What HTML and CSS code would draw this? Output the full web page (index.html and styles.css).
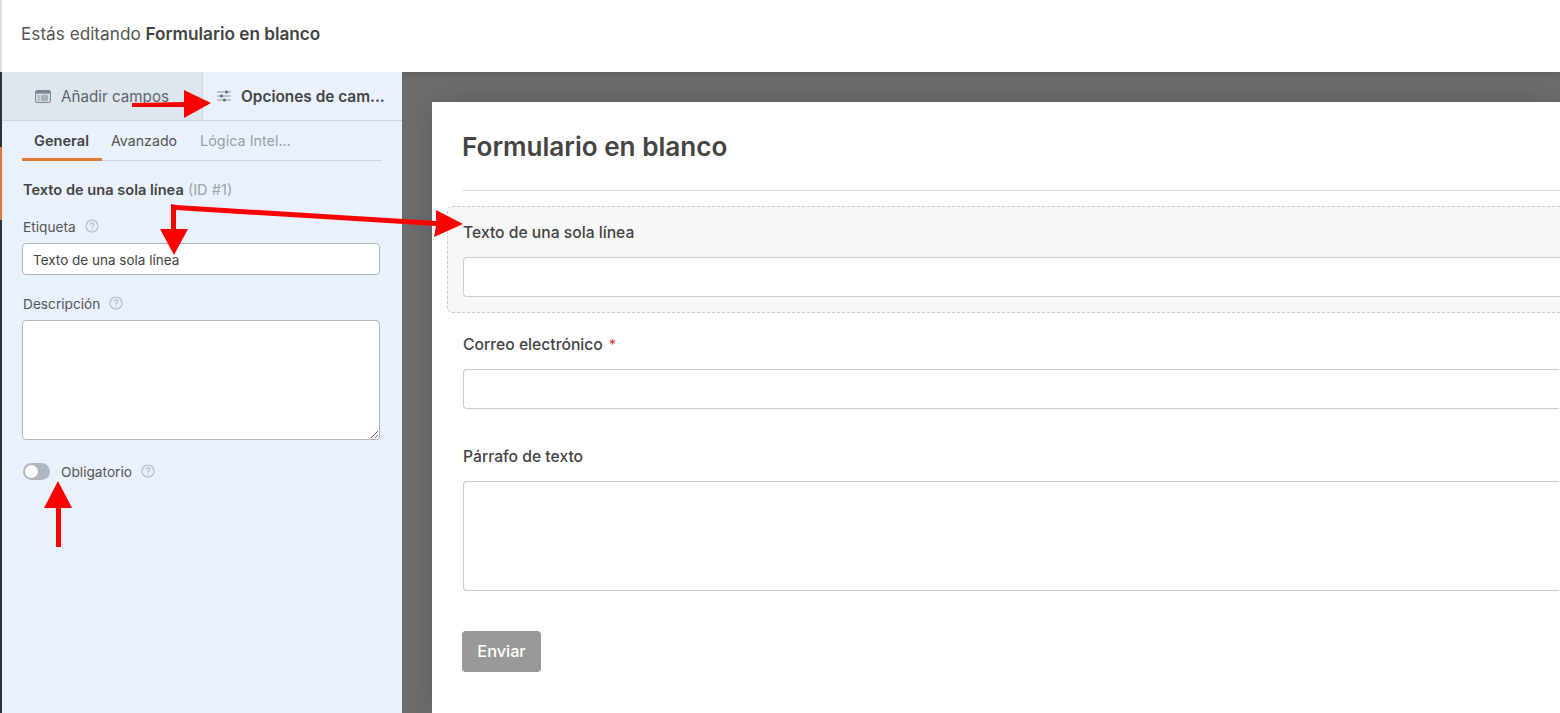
FILE: index.html
```html
<!DOCTYPE html>
<html lang="es">
<head>
    <meta charset="UTF-8">
    <title>Formulario en blanco</title>
    <link rel="stylesheet" href="styles.css">
</head>
<body>
    <header class="topbar">Estás editando <strong>Formulario en blanco</strong></header>

    <div class="builder">
        <div class="admin-strip"><div class="admin-strip-active"></div></div>

        <aside class="sidebar">
            <div class="tabs">
                <div class="tab tab-off">
                    <svg class="tab-icon" viewBox="0 0 16 13" width="16" height="13">
                        <rect x="0.5" y="0.5" width="15" height="12" rx="1.5" fill="#d3dae1" stroke="#7c8791"/>
                        <rect x="1" y="1" width="14" height="2.6" fill="#7c8791"/>
                        <path d="M3 6h1.5M3 8h1.5M3 10h1.5M6 6h7M6 8h7M6 10h7" stroke="#7c8791" stroke-width="1" fill="none"/>
                    </svg>
                    Añadir campos
                </div>
                <div class="tab tab-on">
                    <svg class="tab-icon" viewBox="0 0 14 12" width="14" height="12">
                        <path d="M0 2h14M0 6h14M0 10h14" stroke="#8a949d" stroke-width="1" fill="none"/>
                        <rect x="8" y="0.5" width="3" height="3" rx="1" fill="#6b7680"/>
                        <rect x="3" y="4.5" width="3" height="3" rx="1" fill="#6b7680"/>
                        <rect x="6" y="8.5" width="3" height="3" rx="1" fill="#6b7680"/>
                    </svg>
                    Opciones de cam...
                </div>
            </div>

            <div class="panel">
                <div class="subtabs">
                    <span class="subtab subtab-on">General</span>
                    <span class="subtab">Avanzado</span>
                    <span class="subtab subtab-off">Lógica Intel...</span>
                </div>

                <div class="field-name"><strong>Texto de una sola línea</strong> <span>(ID #1)</span></div>

                <div class="opt-label">Etiqueta
                    <svg class="help" viewBox="0 0 14 14" width="14" height="14"><circle cx="7" cy="7" r="6" fill="none" stroke="#b4bcc4" stroke-width="1.2"/><path d="M5.2 5.5a1.8 1.8 0 1 1 2.7 1.6c-.6.4-.9.7-.9 1.3" fill="none" stroke="#b4bcc4" stroke-width="1.2"/><circle cx="7" cy="10.3" r=".8" fill="#b4bcc4"/></svg>
                </div>
                <input class="opt-input" type="text" value="Texto de una sola línea">

                <div class="opt-label opt-label-desc">Descripción
                    <svg class="help" viewBox="0 0 14 14" width="14" height="14"><circle cx="7" cy="7" r="6" fill="none" stroke="#b4bcc4" stroke-width="1.2"/><path d="M5.2 5.5a1.8 1.8 0 1 1 2.7 1.6c-.6.4-.9.7-.9 1.3" fill="none" stroke="#b4bcc4" stroke-width="1.2"/><circle cx="7" cy="10.3" r=".8" fill="#b4bcc4"/></svg>
                </div>
                <textarea class="opt-textarea"></textarea>

                <div class="toggle-row">
                    <span class="toggle"><span class="toggle-knob"></span></span>
                    <span class="toggle-label">Obligatorio</span>
                    <svg class="help" viewBox="0 0 14 14" width="14" height="14"><circle cx="7" cy="7" r="6" fill="none" stroke="#b4bcc4" stroke-width="1.2"/><path d="M5.2 5.5a1.8 1.8 0 1 1 2.7 1.6c-.6.4-.9.7-.9 1.3" fill="none" stroke="#b4bcc4" stroke-width="1.2"/><circle cx="7" cy="10.3" r=".8" fill="#b4bcc4"/></svg>
                </div>
            </div>
        </aside>

        <main class="canvas">
            <div class="form-card">
                <h1 class="form-title">Formulario en blanco</h1>

                <div class="form-field form-field-active">
                    <label class="form-label">Texto de una sola línea</label>
                    <div class="form-input"></div>
                </div>
                <div class="form-field">
                    <label class="form-label">Correo electrónico <span class="req">*</span></label>
                    <div class="form-input"></div>
                </div>
                <div class="form-field form-field-big">
                    <label class="form-label">Párrafo de texto</label>
                    <div class="form-input form-input-big"></div>
                </div>

                <button class="submit" type="button">Enviar</button>
            </div>
        </main>
    </div>

    <!-- annotation arrows drawn over the screenshot -->
    <svg class="arrows" viewBox="0 0 1560 713" width="1560" height="713">
        <polygon points="132,103 184,102 184,90 211,103 184,118 184,107 132,107"/>
        <polygon points="171,204 176,205 436,221 436,210 463,224 434,237 436,226 176,210 176,229 188,229 174,255 160,229 171,229"/>
        <polygon points="58,481 72,508 61,508 61,547 56,547 56,508 44,508"/>
    </svg>
</body>
</html>
```

FILE: styles.css
```css
* {
    box-sizing: border-box;
}
html, body {
    height: 100%;
}
body {
    margin: 0;
    overflow: hidden;
    font-family: Inter, "Liberation Sans", sans-serif;
    color: #444;
    background: #fff;
}

.topbar {
    height: 72px;
    padding: 24px 0 0 19px;
    font-size: 17.2px;
    line-height: 20px;
    color: #555;
    background: #fff;
    border-left: 2px solid #dcdcdc;
}
.topbar strong {
    font-weight: 600;
    color: #444;
}

.builder {
    display: flex;
    height: 641px;
    overflow: hidden;
}
.admin-strip {
    width: 2px;
    padding-top: 75px;
    background: #2c3338;
}
.admin-strip-active {
    height: 73px;
    background: #e27730;
}

/* left column */
.sidebar {
    width: 400px;
    background: #e9f2fc;
}
.tabs {
    display: flex;
    height: 49px;
    border-bottom: 1px solid #ced7e0;
}
.tab {
    display: flex;
    align-items: center;
    font-size: 15.2px;
}
.tab-off {
    width: 201px;
    padding-left: 33px;
    color: #5c6670;
    background: #dfe7ee;
    border-right: 1px solid #ced7e0;
}
.tab-on {
    width: 199px;
    padding-left: 14px;
    font-size: 15.4px;
    font-weight: 600;
    color: #444;
}
.tab-icon {
    flex: none;
    margin-right: 10px;
}

.panel {
    padding: 0 20px;
}
.subtabs {
    display: flex;
    width: 360px;
    height: 40px;
    border-bottom: 1px solid #ced7e0;
}
.subtab {
    height: 40px;
    padding-top: 11px;
    font-size: 14.2px;
    line-height: 17px;
    color: #555;
    white-space: nowrap;
}
.subtab-on {
    width: 80px;
    margin-right: 9px;
    padding: 12px 0 0 12px;
    font-size: 14.6px;
    font-weight: 600;
    color: #444;
    border-bottom: 3px solid #e27730;
}
.subtab-off {
    margin-left: 23px;
    font-size: 14.4px;
    color: #999fa6;
}

.field-name {
    margin: 21px 0 0 1px;
    font-size: 14.6px;
    line-height: 17px;
    color: #99a1a9;
}
.field-name strong {
    font-weight: 600;
    color: #444;
}
.opt-label {
    display: flex;
    align-items: center;
    margin: 20px 0 0 1px;
    height: 16px;
    font-size: 13.7px;
    color: #555;
}
.opt-label-desc {
    margin-top: 21px;
}
.help {
    flex: none;
    margin: 0 0 2px 9px;
}
.opt-input {
    display: block;
    width: 358px;
    height: 32px;
    margin: 8px 0 0;
    padding: 1px 10px 0;
    font: 13.5px Inter, "Liberation Sans", sans-serif;
    color: #444;
    background: #fff;
    border: 1px solid #b0b7bf;
    border-radius: 4px;
}
.opt-textarea {
    display: block;
    width: 358px;
    height: 120px;
    margin: 8px 0 0;
    background: #fff;
    border: 1px solid #b0b7bf;
    border-radius: 4px;
}
.toggle-row {
    display: flex;
    align-items: center;
    margin: 23px 0 0 1px;
    height: 17px;
}
.toggle {
    display: block;
    width: 27px;
    height: 17px;
    padding: 2px;
    background: #b0b7bf;
    border-radius: 9px;
}
.toggle-knob {
    display: block;
    width: 13px;
    height: 13px;
    background: #fff;
    border-radius: 50%;
}
.toggle-label {
    margin-left: 11px;
    font-size: 13.7px;
    color: #555;
}

/* preview */
.canvas {
    flex: 1;
    min-width: 0;
    padding: 30px 0 0 30px;
    overflow: hidden;
    background: #6d6d6d;
    box-shadow: inset 0 8px 10px -8px rgba(0, 0, 0, .2);
}
.form-card {
    width: 1128px;
    height: 611px;
    padding: 30px 0 0 30px;
    background: #fff;
    box-shadow: 0 0 30px rgba(0, 0, 0, .15);
}
.form-title {
    height: 59px;
    margin: 0 0 15px;
    font-size: 26.1px;
    line-height: 30px;
    font-weight: 600;
    color: #444;
    border-bottom: 1px solid #ddd;
}
.form-field {
    height: 107px;
    margin: 0 0 5px -15px;
    padding: 16px 0 0 15px;
    border: 1px solid transparent;
}
.form-field-active {
    background: #f7f7f7;
    border: 1px dashed #ccc;
    border-right: 0;
    border-radius: 5px 0 0 5px;
}
.form-field-big {
    height: 196px;
}
.form-label {
    display: block;
    height: 19px;
    font-size: 15.7px;
    line-height: 19px;
    font-weight: 500;
    color: #444;
}
.req {
    margin-left: 2px;
    font-size: 14px;
    font-weight: 400;
    color: #d63638;
}
.form-input {
    height: 40px;
    margin-top: 15px;
    background: #fff;
    border: 1px solid #ccc;
    border-right: 0;
    border-radius: 4px 0 0 4px;
}
.form-input-big {
    height: 110px;
}
.submit {
    display: block;
    width: 79px;
    height: 41px;
    padding: 0 0 2px;
    font: 500 16.3px Inter, "Liberation Sans", sans-serif;
    color: #fff;
    background: #999;
    border: 0;
    border-radius: 4px;
}

.arrows {
    position: absolute;
    top: 0;
    left: 0;
    pointer-events: none;
}
.arrows polygon {
    fill: #fe0000;
}
```
